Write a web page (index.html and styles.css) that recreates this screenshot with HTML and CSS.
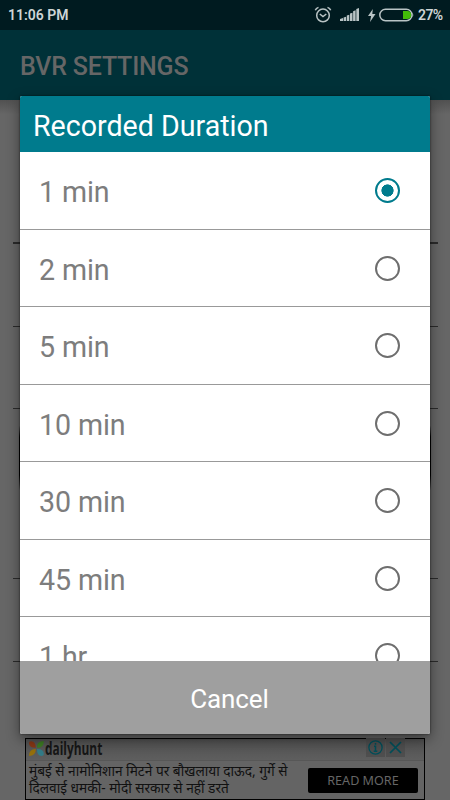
FILE: index.html
```html
<!DOCTYPE html>
<html lang="en">
<head>
<meta charset="utf-8">
<title>BVR Settings</title>
<link rel="stylesheet" href="styles.css">
</head>
<body>
<div class="screen">
  <header class="status">
    <span class="time">11:06 PM</span>
    <svg class="alarm" width="18" height="18" viewBox="0 0 18 18" fill="none" stroke="#b9c4c5" stroke-width="1.5"><circle cx="9" cy="9.4" r="6.3"/><path d="M1.3 4.3Q2.1 2.2 4.5 1.4M13.5 1.4Q15.9 2.2 16.7 4.3M5.8 8l3.2 2.6L12.3 8"/></svg>
    <svg class="signal" width="20" height="14" viewBox="0 0 20 14" fill="#b9c4c5"><path d="M0 13v-2l3-1v3zM3.6 13V9.5l2.5-.7V13zM6.8 13V7.6l2.5-.8V13zM10 13V5.5l2.5-.8V13zM13.1 13V3.3l2.5-1V13zM16.3 13V1L19 0v13z"/></svg>
    <svg class="bolt" width="8" height="13" viewBox="0 0 8 13" fill="#b9c4c5"><path d="M4.8 0L0 7h3.1L2 13l5.5-8H4.3z"/></svg>
    <svg class="battery" width="35" height="14" viewBox="0 0 35 14"><rect x=".8" y="1.3" width="32.2" height="11.4" rx="5.7" fill="none" stroke="#b9c4c5" stroke-width="1.5"/><path d="M33.6 4.6q1.4 2.4 0 4.8z" fill="#b9c4c5"/><path d="M24 3h4.2a4 4 0 0 1 0 8H24z" fill="#43bb08"/></svg>
    <span class="percent">27%</span>
  </header>
  <div class="appbar"><h1>BVR SETTINGS</h1></div>
  <main class="settings">
    <div class="setting first"></div>
    <div class="setting second"></div>
    <div class="setting third"></div>
    <div class="setting section"><div class="panel"></div></div>
    <div class="setting last"></div>
  </main>
  <aside class="ad">
    <div class="ad-top">
      <svg width="15" height="15" viewBox="0 0 15 15"><path d="M0 2Q0 0 2.3.2 6.6.4 6.8 6.8 0 7 0 2z" fill="#873715"/><path d="M14.8 0Q15 7 8 6.8 7.5 0 14.8 0z" fill="#3c7b22"/><path d="M0 15Q0 7.8 6.8 8 7 14.7 0 15z" fill="#96700b"/><path d="M8 8q6.5-.2 6.8 4.5Q14.9 15 12.5 15 7.7 14.7 8 8z" fill="#327b87"/></svg>
      <span class="brand">dailyhunt</span>
      <span class="choice"><svg width="15" height="15" viewBox="0 0 15 15" fill="none" stroke="#004e59" stroke-width="1.3"><circle cx="7.5" cy="7.5" r="6.6"/><path d="M7.5 3v1.7M6 6.3h1.5v4.8M5.7 11.3h3.6" stroke-width="1.5"/></svg></span>
      <span class="choice"><svg width="13" height="13" viewBox="0 0 13 13" stroke="#004e59" stroke-width="1.7"><path d="M1 1l11 11M12 1L1 12"/></svg></span>
    </div>
    <div class="ad-body">
      <p lang="hi"><span class="l1">मुंबई से नामोनिशान मिटने पर बौखलाया दाऊद, गुर्गे से</span><br><span class="l2">दिलवाई धमकी- मोदी सरकार से नहीं डरते</span></p>
      <span class="more">READ MORE</span>
    </div>
  </aside>
  <section class="dialog">
    <h2>Recorded Duration</h2>
    <div class="list">
      <div class="row"><span>1 min</span><i class="radio on"></i></div>
      <div class="row"><span>2 min</span><i class="radio"></i></div>
      <div class="row"><span>5 min</span><i class="radio"></i></div>
      <div class="row"><span>10 min</span><i class="radio"></i></div>
      <div class="row"><span>30 min</span><i class="radio"></i></div>
      <div class="row"><span>45 min</span><i class="radio"></i></div>
      <div class="row"><span>1 hr</span><i class="radio"></i></div>
    </div>
    <div class="cancel">Cancel</div>
  </section>
</div>
</body>
</html>
```

FILE: styles.css
```css
* { box-sizing: border-box; }
body { margin: 0; font-family: Roboto, "Noto Sans", sans-serif; }
h1, h2, p { margin: 0; font-weight: 400; }
svg { display: block; flex: none; }
.screen { position: relative; width: 450px; height: 800px; overflow: hidden; background: #666; display: flex; flex-direction: column; }
.status { height: 30px; flex: none; background: #001b20; color: #ced5d6; display: flex; align-items: center; padding: 0 8px; font-size: 14px; font-weight: 600; }
.alarm { margin-left: auto; }
.signal { margin-left: 8px; }
.bolt { margin-left: 8px; }
.battery { margin-left: 3px; }
.percent { margin-left: 4px; font-size: 14px; width: 24px; white-space: nowrap; letter-spacing: -.6px; }
.appbar { height: 70px; flex: none; background: #003138; padding: 3px 20px 0; display: flex; align-items: center; }
h1 { font-size: 25px; font-weight: 500; color: #666; letter-spacing: -.2px; }
.settings { padding: 0 12.5px; height: 638px; flex: none; background: linear-gradient(#515151, #666 14px); }
.setting { border-bottom: 1px solid #2b2b2b; }
.first { height: 144px; border-bottom-width: 2px; }
.second { height: 83px; }
.third { height: 82px; }
.section { height: 170px; padding: 16px 6.5px 0; }
.panel { height: 66px; background: linear-gradient(transparent, #000 12px, #000 50px, transparent); border-radius: 3px; }
.last { height: 83px; }
.ad { width: 400px; height: 62px; flex: none; margin-left: 25px; border: 1px solid #000; background: #646464; }
.ad-top { height: 22px; padding-left: 3px; display: flex; align-items: center; background: linear-gradient(#515151, #5e5e5e); border-bottom: 1px solid #575757; }
.ad-top > svg { margin-top: -3px; }
.brand { flex: 1; margin-left: 1px; margin-top: -4px; font: 700 18px/20px "Open Sans", sans-serif; color: #161616; transform: scaleX(.66); transform-origin: 0 50%; }
.choice { width: 19px; height: 19px; margin-right: 1px; align-self: flex-start; margin-top: -1px; background: #4e4e4e; display: flex; align-items: center; justify-content: center; }
.choice:last-child { margin-right: 19px; }
.ad-body { height: 38px; display: flex; padding: 0 6px 0 3px; justify-content: space-between; align-items: center; }
.ad p { font-family: "Noto Sans", "Noto Sans Devanagari", sans-serif; font-size: 13.7px; line-height: 17px; color: #111; white-space: nowrap; width: 270px; margin-top: -3px; }
.more { width: 110px; height: 25px; border-radius: 2px; background: #000; color: #666; font: 12.6px/25px "Noto Sans", sans-serif; text-align: center; }
.dialog { position: absolute; left: 20px; top: 96px; width: 410px; height: 638px; border-radius: 2px; overflow: hidden; background: #fff; box-shadow: 0 5px 14px rgba(0, 0, 0, .45), 0 0 2px rgba(0, 0, 0, .7); display: flex; flex-direction: column; }
h2 { height: 56px; flex: none; padding: 2px 13px 0; background: #007b8d; color: #fff; font-size: 28.6px; line-height: 57px; }
.list { height: 509px; flex: none; overflow: hidden; }
.row { height: 77.5px; padding: 1px 30.5px 0 19px; border-bottom: 1px solid #999; display: flex; align-items: center; justify-content: space-between; color: #7d7d7d; font-size: 28.6px; letter-spacing: -.1px; }
.row span { padding-top: 3px; }
.radio { width: 25px; height: 25px; border: 2px solid #6e6e6e; border-radius: 50%; }
.on { border-color: #007b8d; background: radial-gradient(circle, #007b8d 5.8px, transparent 6.4px); }
.cancel { flex: 1; background: #9f9f9f; color: #fff; font-size: 26px; letter-spacing: -.1px; text-align: center; line-height: 76px; padding-left: 9px; }
```
